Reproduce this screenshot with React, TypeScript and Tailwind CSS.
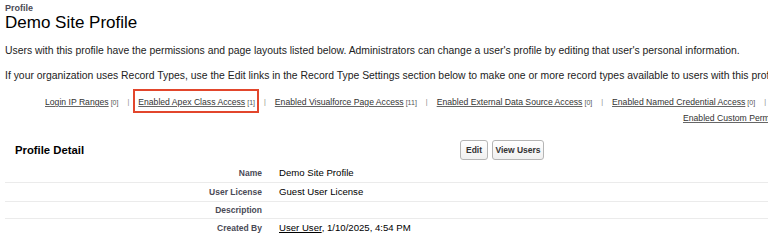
import { Fragment } from "react";

const links = [
  { label: "Login IP Ranges", count: "0" },
  { label: "Enabled Apex Class Access", count: "1", marked: true },
  { label: "Enabled Visualforce Page Access", count: "11" },
  { label: "Enabled External Data Source Access", count: "0" },
  { label: "Enabled Named Credential Access", count: "0" },
];

const rows = [
  { label: "Name", value: "Demo Site Profile", h: "h-[19px]" },
  { label: "User License", value: "Guest User License", h: "h-[19px]" },
  { label: "Description", value: "", h: "h-[17px]" },
  { label: "Created By", value: "created", h: "h-[18px]" },
];

const App = () => (
  <div className="h-[246px] w-[768px] overflow-hidden bg-white font-['Liberation_Sans',Arial,sans-serif] text-black">
    <div className="pl-[5px] pt-[3px]">
      <div className="text-[9px] font-bold leading-[10px] text-[#4a4a56]">Profile</div>
      <h1 className="text-[17px] leading-[20px]">Demo Site Profile</h1>
    </div>

    <p className="mt-[12px] whitespace-nowrap pl-[5px] text-[10.4px] leading-[12px] text-[#222]">
      Users with this profile have the permissions and page layouts listed below. Administrators can change a user's profile by editing that user's personal information.
    </p>
    <p className="mt-[13px] whitespace-nowrap pl-[5px] text-[10.4px] leading-[12px] text-[#222]">
      If your organization uses Record Types, use the Edit links in the Record Type Settings section below to make one or more record types available to users with this profile.
    </p>

    <div className="mt-[14px] flex whitespace-nowrap pl-[45px] text-[8.65px] leading-[12px] text-[#333]">
      {links.map((l, i) => (
        <Fragment key={l.label}>
          {i > 0 && <span className="mx-[9px] text-[7px] text-[#888]">|</span>}
          <span className="relative">
            <span className="underline decoration-[#666] underline-offset-[1px]">{l.label}</span>
            <span className="ml-[2px] text-[7px] text-[#555]">[{l.count}]</span>
            {l.marked && (
              <span className="absolute -top-[7px] -bottom-[4px] -left-[5px] -right-[4px] border-2 border-[#e2462c]" />
            )}
          </span>
        </Fragment>
      ))}
      <span className="mx-[9px] text-[7px] text-[#888]">|</span>
    </div>
    <div className="mt-[3px] whitespace-nowrap pl-[683px] text-[8.65px] leading-[12px] text-[#333]">
      <span className="underline decoration-[#666] underline-offset-[1px]">Enabled Custom Permissions</span>
    </div>

    <div className="mt-[16px] flex h-[20px] items-center">
      <h2 className="w-[460px] pl-[15px] text-[11.3px] font-bold">Profile Detail</h2>
      <div className="flex gap-[4px]">
        <button className="h-[20px] w-[28px] rounded-[3px] border border-[#b5b5b5] bg-gradient-to-b from-white to-[#f0f0f0] text-[8.5px] font-bold text-[#333]">
          Edit
        </button>
        <button className="h-[20px] w-[52px] rounded-[3px] border border-[#b5b5b5] bg-gradient-to-b from-white to-[#f0f0f0] text-[8.5px] font-bold text-[#333]">
          View Users
        </button>
      </div>
    </div>

    <div className="ml-[5px] mt-[4px]">
      {rows.map((r, i) => (
        <div
          key={r.label}
          className={`flex items-center ${r.h} ${i < rows.length - 1 ? "border-b border-[#ebebeb]" : ""}`}
        >
          <div className="w-[257px] text-right text-[8.5px] font-bold text-[#4a4a56]">{r.label}</div>
          <div className="pl-[17px] text-[9.6px] text-black">
            {r.value === "created" ? (
              <>
                <span className="underline underline-offset-[1px]">User User</span>, 1/10/2025, 4:54 PM
              </>
            ) : (
              r.value
            )}
          </div>
        </div>
      ))}
    </div>
  </div>
);

export default App;
